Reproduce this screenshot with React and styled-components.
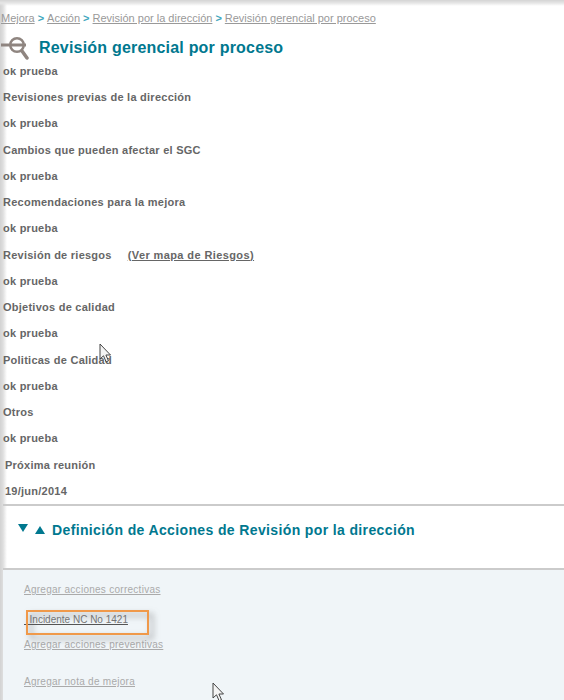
import React from "react";
import styled, { createGlobalStyle } from "styled-components";

const GlobalStyle = createGlobalStyle`
  html, body {
    margin: 0;
    padding: 0;
    background: #fff;
  }
  body {
    font-family: "Liberation Sans", Arial, sans-serif;
  }
`;

const Page = styled.div`
  position: relative;
  width: 564px;
  height: 700px;
  overflow: hidden;
  display: flex;
  flex-direction: column;
  background:
    linear-gradient(to bottom, #d4d4d4, #e6e6e6 3px, rgba(255, 255, 255, 0) 6px),
    linear-gradient(to right, #d2d2d2, #dedede 3px, #ffffff 7px);
`;

const Breadcrumb = styled.div`
  padding: 12px 0 0 1px;
  height: 13px;
  font-size: 11px;
  line-height: 13px;
  color: #9a9a9a;
  white-space: nowrap;
`;

const Crumb = styled.a`
  color: #999;
  text-decoration: underline;
`;

const Sep = styled.span`
  color: #3fa7bd;
  font-weight: bold;
  margin: 0 3px;
`;

const TitleRow = styled.div`
  display: flex;
  align-items: flex-start;
  gap: 10px;
  height: 38px;
  padding: 4px 0 0 1px;
  box-sizing: border-box;
  margin-top: 5px;
`;

const Title = styled.h1`
  margin: 0;
  font-size: 16px;
  line-height: 28px;
  font-weight: bold;
  letter-spacing: 0.2px;
  color: #00788f;
`;

const FormList = styled.div`
  height: 436px;
  overflow: hidden;
  padding-left: 3px;
  color: #666;
`;

const FormInner = styled.div`
  margin-top: -10.25px;
`;

const FormRow = styled.div`
  height: 26.25px;
  line-height: 26.25px;
  font-size: 11px;
  font-weight: bold;
  letter-spacing: 0.25px;
  white-space: nowrap;
  padding-left: ${(p) => (p.$indent ? "2px" : "0")};
`;

const RowLink = styled.a`
  margin-left: 16px;
  color: #666;
  letter-spacing: 0.4px;
  text-decoration: underline;
`;

const Section = styled.div`
  box-sizing: border-box;
  height: 66px;
  margin-left: 3px;
  padding: 15px 0 0 15px;
  border-top: 2px solid #cbcbcb;
  border-bottom: 2px solid #cbcbcb;
  display: flex;
  align-items: flex-start;
  gap: 7px;
`;

const Arrows = styled.div`
  display: flex;
  gap: 7px;
  padding-top: 3px;
`;

const ArrowSvg = styled.svg`
  margin-top: ${(p) => (p.$up ? "2px" : "0")};
`;

const SectionTitle = styled.h2`
  margin: 0;
  font-size: 14px;
  line-height: 18px;
  font-weight: bold;
  letter-spacing: 0.37px;
  color: #00788f;
`;

const Panel = styled.div`
  flex: 1;
  margin-left: 3px;
  background: #f0f5f8;
  padding: 14px 0 0 21px;
  font-size: 10px;
`;

const PanelLink = styled.a`
  display: block;
  width: fit-content;
  color: #aaa;
  letter-spacing: 0.27px;
  text-decoration: underline;
  line-height: 12px;
  margin-bottom: ${(p) => p.$gap}px;
`;

const Incident = styled.div`
  position: relative;
  width: fit-content;
  line-height: 12px;
  margin-bottom: 13px;
  color: #777;
  text-decoration: underline;
  text-decoration-color: #555;
  white-space: pre;
`;

const Highlight = styled.div`
  position: absolute;
  left: 2px;
  top: -4px;
  box-sizing: border-box;
  width: 123px;
  height: 25px;
  border: 2px solid #f0994a;
  filter: drop-shadow(4px 4px 3px rgba(90, 90, 90, 0.6));
`;

const Cursor = styled.svg`
  position: absolute;
  left: ${(p) => p.$x}px;
  top: ${(p) => p.$y}px;
`;

const MagnifierIcon = () => (
  <svg width="28" height="28" viewBox="0 0 28 28" fill="none">
    <circle cx="16" cy="11" r="6.75" stroke="#8f8580" strokeWidth="2.5" />
    <path d="M0 11h25" stroke="#8f8580" strokeWidth="3" />
    <path d="M21 17l5 7" stroke="#8f8580" strokeWidth="3.5" strokeLinecap="round" />
  </svg>
);

const CursorIcon = ({ x, y }) => (
  <Cursor $x={x} $y={y} width="13" height="20" viewBox="0 0 13 20">
    <path
      d="M1 1v15l3.5-3.2 2.6 6 2.4-1-2.6-5.8h4.6z"
      fill="#f4f4f4"
      stroke="#444"
      strokeWidth="1"
    />
  </Cursor>
);

const ArrowIcon = ({ up }) => (
  <ArrowSvg $up={up} width="10" height="8" viewBox="0 0 10 8">
    <path d={up ? "M5 0l5 8H0z" : "M0 0h10L5 8z"} fill="#00788f" />
  </ArrowSvg>
);

const rows = [
  { text: "ok prueba" },
  { text: "Revisiones previas de la dirección" },
  { text: "ok prueba" },
  { text: "Cambios que pueden afectar el SGC" },
  { text: "ok prueba" },
  { text: "Recomendaciones para la mejora" },
  { text: "ok prueba" },
  { text: "Revisión de riesgos", link: "(Ver mapa de Riesgos)" },
  { text: "ok prueba" },
  { text: "Objetivos de calidad" },
  { text: "ok prueba" },
  { text: "Politicas de Calidad" },
  { text: "ok prueba" },
  { text: "Otros" },
  { text: "ok prueba" },
  { text: "Próxima reunión", indent: true },
  { text: "19/jun/2014", indent: true },
];

const App = () => {
  return (
    <Page>
      <GlobalStyle />
      <Breadcrumb>
        <Crumb>Mejora</Crumb>
        <Sep>&gt;</Sep>
        <Crumb>Acción</Crumb>
        <Sep>&gt;</Sep>
        <Crumb>Revisión por la dirección</Crumb>
        <Sep>&gt;</Sep>
        <Crumb>Revisión gerencial por proceso</Crumb>
      </Breadcrumb>
      <TitleRow>
        <MagnifierIcon />
        <Title>Revisión gerencial por proceso</Title>
      </TitleRow>
      <FormList>
        <FormInner>
          {rows.map((r, i) => (
            <FormRow key={i} $indent={r.indent}>
              {r.text}
              {r.link && <RowLink>{r.link}</RowLink>}
            </FormRow>
          ))}
        </FormInner>
      </FormList>
      <Section>
        <Arrows>
          <ArrowIcon />
          <ArrowIcon up />
        </Arrows>
        <SectionTitle>Definición de Acciones de Revisión por la dirección</SectionTitle>
      </Section>
      <Panel>
        <PanelLink $gap={18}>Agregar acciones correctivas</PanelLink>
        <Incident>
          {"  Incidente NC No 1421"}
          <Highlight />
        </Incident>
        <PanelLink $gap={25}>Agregar acciones preventivas</PanelLink>
        <PanelLink $gap={0}>Agregar nota de mejora</PanelLink>
      </Panel>
      <CursorIcon x={99} y={343} />
      <CursorIcon x={212} y={682} />
    </Page>
  );
};

export default App;
